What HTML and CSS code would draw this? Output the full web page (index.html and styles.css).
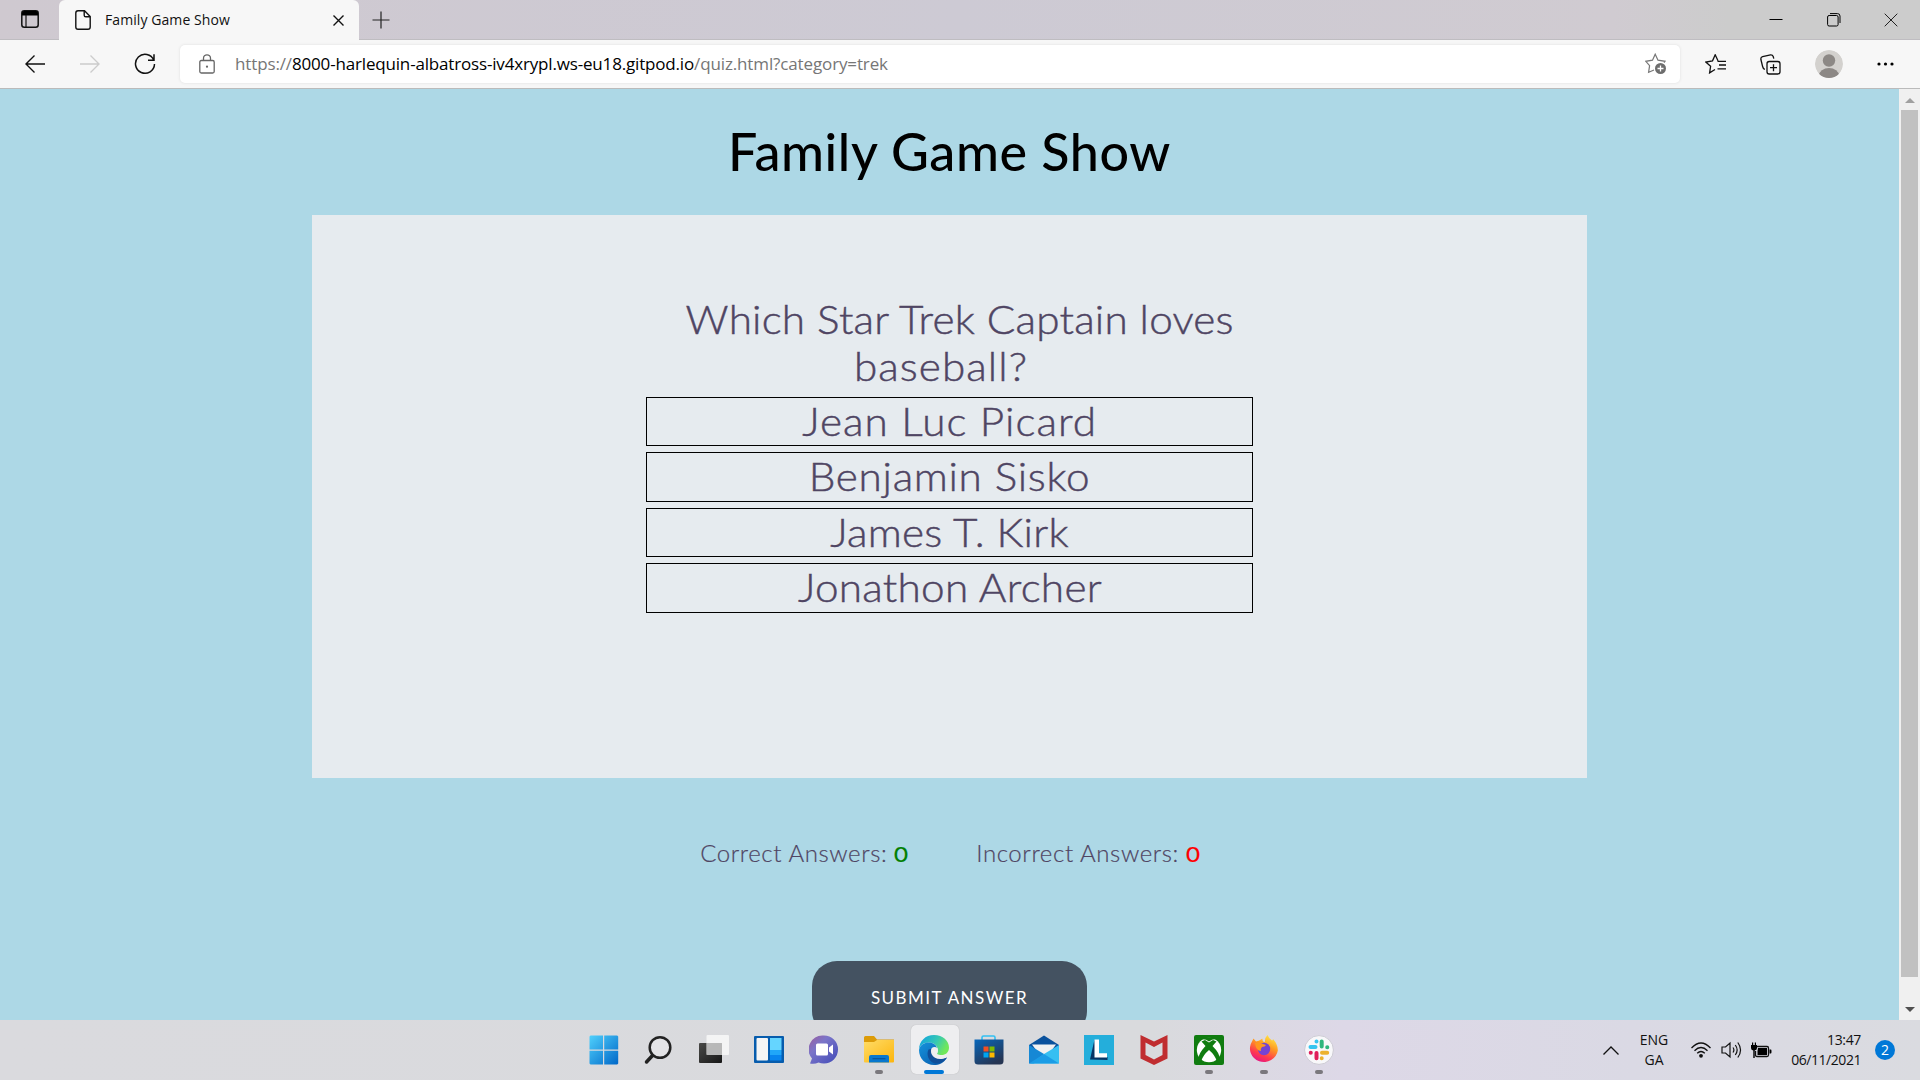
FILE: index.html
```html
<!DOCTYPE html>
<html lang="en">
<head>
<meta charset="utf-8">
<title>Family Game Show</title>
<link rel="stylesheet" href="styles.css">
</head>
<body>
<div class="desktop">
  <header class="tabs">
    <div class="tab-actions"><svg width="18" height="18" viewBox="0 0 18 18"><rect x=".8" y=".8" width="16.4" height="16.4" rx="2.5" fill="none" stroke="#111" stroke-width="1.5"/><path d="M1 2.5Q1 1 3 1h12q2 0 2 1.500V5.500H1z" fill="#000"/><path d="M5 5v12" stroke="#111" stroke-width="1.2"/></svg></div>
    <div class="tab">
      <svg width="16" height="20" viewBox="0 0 16 20" fill="none" stroke="#111" stroke-width="1.4"><path d="M3 .8h6.500L15.200 6.500V17q0 2.200-2.200 2.200H3Q.8 19.200.8 17V3Q.8.8 3 .8zM9.200 1v4.200q0 1.600 1.600 1.600H15"/></svg>
      <span class="tab-title">Family Game Show</span>
      <svg class="tab-close" width="11" height="11" viewBox="0 0 11 11" stroke="#111" stroke-width="1.4"><path d="M.5.500l10 10M10.500.500l-10 10"/></svg>
    </div>
    <svg class="new-tab" width="18" height="18" viewBox="0 0 18 18" stroke="#222" stroke-width="1.200"><path d="M9 .5v17M.5 9h17"/></svg>
    <div class="window-buttons">
      <svg width="14" height="14" viewBox="0 0 14 14"><path d="M.5 6.500h13" stroke="#000"/></svg>
      <svg width="14" height="14" viewBox="0 0 14 14" fill="none" stroke="#000"><rect x=".6" y="2.500" width="10.500" height="10.500" rx="1.500"/><path d="M3 .6h7.500q2.500 0 2.500 2.500V10"/></svg>
      <svg width="14" height="14" viewBox="0 0 14 14" stroke="#222"><path d="M.7.700l12.600 12.600M13.300.700L.700 13.300"/></svg>
    </div>
  </header>
  <nav class="toolbar">
    <svg width="20" height="18" viewBox="0 0 20 18" fill="none" stroke="#111" stroke-width="1.400"><path d="M20 9H1M9.500.600L1 9l8.500 8.400"/></svg>
    <svg width="20" height="18" viewBox="0 0 20 18" fill="none" stroke="#ccc" stroke-width="1.400"><path d="M0 9h19M10.500.600L19 9l-8.500 8.400"/></svg>
    <svg width="22" height="22" viewBox="0 0 22 22" fill="none" stroke="#111" stroke-width="1.500"><path d="M19.800 7.200A9.500 9.500 0 1 0 20.500 11M20 1.200v6h-6"/></svg>
    <div class="address">
      <svg width="16" height="20" viewBox="0 0 16 20" fill="none" stroke="#666" stroke-width="1.300"><rect x=".8" y="6.500" width="14.400" height="12.500" rx="1.500"/><path d="M4.500 6.500V4.300a3.500 3.500 0 0 1 7 0v2.200"/><circle cx="8" cy="12.700" r="1.100" fill="#666" stroke="none"/></svg>
      <span class="url">https://<b>8000-harlequin-albatross-iv4xrypl.ws-eu18.gitpod.io</b>/quiz.html?category=trek</span>
      <svg class="star-add" width="22" height="22" viewBox="0 0 22 22" fill="none" stroke="#777" stroke-width="1.200"><path d="M9 17l-5.400 2.200 1-6.500L.800 8.300 7.500 7.200 10.200 1.200 13 7.200l7 1.100-1 1.300"/><circle cx="15.500" cy="15.500" r="5.500" fill="#6d6d6d" stroke="none"/><path d="M15.500 12.500v6M12.500 15.500h6" stroke="#fff" stroke-width="1.300"/></svg>
    </div>
    <div class="tools">
      <svg width="21" height="20" viewBox="0 0 21 20" fill="none" stroke="#111" stroke-width="1.300"><path d="M10 15.500l-5.400 3.400 1-6.600L.800 8 7.500 6.800 10.200.800 13 6.800M12.500 7.300H21M14 11h7M12.500 14.800H21"/></svg>
      <svg width="21" height="21" viewBox="0 0 21 21" fill="none" stroke="#111" stroke-width="1.300"><rect x="7" y="7.500" width="13" height="12.500" rx="2.200"/><path d="M13.500 10.200v7M10 13.700h7M4.800 15.500Q3 14.500 2.600 12.500L.9 5.500Q.5 3.200 2.600 2.600L10.500.800Q12.600.600 13.200 2.500L13.800 4.600"/></svg>
      <svg width="28" height="28" viewBox="0 0 28 28"><defs><clipPath id="avatar"><circle cx="14" cy="14" r="14"/></clipPath></defs><g clip-path="url(#avatar)"><circle cx="14" cy="14" r="14" fill="#d3d1ce"/><circle cx="14" cy="10.500" r="6.200" fill="#8c8885"/><ellipse cx="14" cy="25.500" rx="10" ry="7.500" fill="#8c8885"/></g></svg>
      <svg width="17" height="4" viewBox="0 0 17 4"><circle cx="2" cy="2" r="1.600"/><circle cx="8.500" cy="2" r="1.600"/><circle cx="15" cy="2" r="1.600"/></svg>
    </div>
  </nav>
  <div class="viewport">
    <main class="page">
      <h1 class="title">Family Game Show</h1>
      <section class="card">
        <div class="question"><p class="q-first">Which Star Trek Captain loves</p><p class="q-last">baseball?</p></div>
        <ul class="options">
          <li class="option wide"><span>Jean Luc Picard</span></li>
          <li class="option mid"><span>Benjamin Sisko</span></li>
          <li class="option"><span>James T. Kirk</span></li>
          <li class="option"><span>Jonathon Archer</span></li>
        </ul>
      </section>
      <div class="scores">
        <p class="score">Correct Answers: <strong class="right">0</strong></p>
        <p class="score">Incorrect Answers: <strong class="wrong">0</strong></p>
      </div>
      <button class="submit">SUBMIT ANSWER</button>
    </main>
    <div class="scrollbar"><i class="arrow-up"></i><i class="thumb"></i><i class="arrow-down"></i></div>
  </div>
  <footer class="taskbar">
    <div class="apps">
      <div class="app"><svg width="30" height="30" viewBox="0 0 30 30"><defs><linearGradient id="win" x2="1" y2="1"><stop stop-color="#4fd0fc"/><stop offset="1" stop-color="#0067c8"/></linearGradient></defs><path d="M1.500.500H14v14H.500v-13zM15.200.500h13l1 1v13h-14zM.500 15.700H14v13.800H1.500l-1-1zM15.200 15.700h14v12.800l-1 1h-13z" fill="url(#win)"/></svg></div>
      <div class="app"><svg width="30" height="30" viewBox="0 0 30 30" fill="none" stroke="#222"><circle cx="16" cy="12.500" r="10.300" fill="#e3e3e6" stroke-width="2.500"/><path d="M8.500 20.500l-6 6.500" stroke-width="3.500" stroke-linecap="round"/></svg></div>
      <div class="app"><svg width="30" height="30" viewBox="0 0 30 30"><defs><linearGradient id="tv" x2="1" y2="1"><stop stop-color="#4a4a48"/><stop offset="1" stop-color="#161616"/></linearGradient></defs><rect x="0" y="8" width="23" height="20" rx="1" fill="url(#tv)"/><rect x="7.500" y="0" width="22.500" height="20" rx="1" fill="#fafafa" fill-opacity=".8"/><path d="M7.500 8H23v12H7.500z" fill="#aaa" fill-opacity=".65"/></svg></div>
      <div class="app"><svg width="30" height="30" viewBox="0 0 30 30"><rect y="1" width="30" height="27" rx="1" fill="#075cad"/><rect x="2.500" y="3" width="11.500" height="22.500" rx="1" fill="#f5f5f5"/><path d="M16 3h11.500v12H16z" fill="#65d5ff"/><path d="M16 15h11.500v5H16z" fill="#20a7f9"/><path d="M16 20h11.500v5.500H16z" fill="#0885ee"/></svg></div>
      <div class="app"><svg width="30" height="30" viewBox="0 0 30 30"><defs><linearGradient id="chat" x2="1" y2="1"><stop stop-color="#9c5b9b"/><stop offset=".35" stop-color="#7b75c9"/><stop offset="1" stop-color="#3f49b7"/></linearGradient></defs><path d="M15 .500a14 14 0 1 1 0 28q-3 0-5.500-1-4 2-8.500 1l2-5A14 14 0 0 1 15 .500z" fill="url(#chat)"/><rect x="7" y="8.500" width="12" height="12" rx="1.500" fill="#fff"/><path d="M20 12.500l4-3v10l-4-3z" fill="#fff"/></svg></div>
      <div class="app open"><svg width="30" height="30" viewBox="0 0 30 30"><defs><linearGradient id="fold" x2="1" y2="1"><stop stop-color="#ffdc67"/><stop offset="1" stop-color="#fcb50d"/></linearGradient></defs><path d="M0 2.500q0-1.500 1.500-1.500H10l3 3.500h17V10H0z" fill="#dc9b08"/><path d="M0 7h10l3-2h17v21.500q0 1-1 1H1q-1 0-1-1z" fill="url(#fold)"/><path d="M5 27.500V22q0-2 2-2h16q2 0 2 2v5.500z" fill="#0878ce"/><path d="M8.500 23.700h13" stroke="#07539a" stroke-width="1.200"/></svg></div>
      <div class="app active"><svg width="30" height="30" viewBox="0 0 30 30"><defs><linearGradient id="edg" x2="1" y2=".4"><stop offset=".1" stop-color="#13a5de"/><stop offset=".6" stop-color="#35c8b4"/><stop offset="1" stop-color="#70e75b"/></linearGradient><linearGradient id="edb" x2="1" y2="1"><stop stop-color="#1593dc"/><stop offset="1" stop-color="#0857a9"/></linearGradient></defs><path d="M0 15C0 6 6.500 0 15 0c9 0 15 6 15 12.500C30 17.500 26.500 20 22.500 20c-4 0-5-1-4-2.500C20 12 16 7.500 10 7.500 4 7.500.500 11 0 15z" fill="url(#edg)"/><path d="M0 15C1 9.500 5.500 7.500 9.500 7.500c5 0 8 2.500 8.500 6-3.500-2-7 1.500-6 5.500C13 24.500 20 27 28 22.500 24.500 28.500 20 30 15 30 6.500 30 0 23.500 0 15z" fill="url(#edb)"/><path d="M9.500 14.500c-2.500 5 0 12 6.500 14 5 .500 9.500-2 12-6-7 3-13 1.500-15.500-3.500-.800-2 0-4 1.500-5.500z" fill="#104f99"/><circle cx="15.500" cy="15.500" r="3.500" fill="#eeeef0"/></svg></div>
      <div class="app"><svg width="30" height="30" viewBox="0 0 30 30"><defs><linearGradient id="store" x2=".6" y2="1"><stop stop-color="#0867bb"/><stop offset="1" stop-color="#263553"/></linearGradient></defs><path d="M8 5V2.500Q8 1 9.500 1h10Q21 1 21 2.500V5" fill="none" stroke="#32c0f2" stroke-width="1.600"/><path d="M.500 4.500h29V26q0 3.500-3.500 3.500H4Q.500 29.500.500 26z" fill="url(#store)"/><path d="M9.500 11.500h5v5h-5z" fill="#f25022"/><path d="M15.500 11.500h5v5h-5z" fill="#7fba00"/><path d="M9.500 17.500h5v5h-5z" fill="#00a4ef"/><path d="M15.500 17.500h5v5h-5z" fill="#ffb900"/></svg></div>
      <div class="app"><svg width="30" height="30" viewBox="0 0 30 30"><path d="M0 10L15 .500 30 10v6H0z" fill="#0b529d"/><path d="M3 9.500h24L20 19H10z" fill="#f1f1f1"/><path d="M0 10l15 9-10 9.500H0z" fill="#1688d5"/><path d="M30 10v18.500H2L15 19z" fill="#36bff2"/><path d="M15 19l15 9.500H0z" fill="#1b9ce6"/></svg></div>
      <div class="app"><svg width="30" height="30" viewBox="0 0 30 30"><path d="M0 0h30v30H0z" fill="#24aedb"/><path d="M10.500 4.500L6 24.500l17.500.500v-3H12z" fill="#063565"/><path d="M10.500 4.500H15v13.700h8V22.500H10.500z" fill="#fff"/></svg></div>
      <div class="app"><svg width="30" height="30" viewBox="0 0 30 30"><path d="M1.500 0L15 6.500 28.500 0v23.500L15 30 1.500 23.500zM6.500 7.500V20L15 24.500 23.500 20V7.500L15 12z" fill="#c02d30" fill-rule="evenodd"/></svg></div>
      <div class="app open"><svg width="30" height="30" viewBox="0 0 30 30"><rect width="30" height="30" rx="2" fill="#107c10"/><circle cx="15" cy="15" r="12.200" fill="#fff"/><path d="M7 4.500q4-1 8 2 4-3 8-2L22 3.500Q15 1 8 3.500zM15 7.500l4-2.500 3.500 1.500L18.500 11q8 8 7 13l-2.500 2.500Q21 20 15 15 9 20 7 26.500L4.500 24Q4 19 11.500 11L7.500 6.500 11 5z" fill="#107c10"/></svg></div>
      <div class="app open"><svg width="30" height="30" viewBox="0 0 30 30"><defs><linearGradient id="ff" x1=".8" x2=".3" y2="1"><stop stop-color="#fff04a"/><stop offset=".4" stop-color="#ff9a21"/><stop offset=".75" stop-color="#ff384f"/><stop offset="1" stop-color="#e31587"/></linearGradient></defs><path d="M3 6.500l1.500-3 2.500 3q3-.500 5-2 1-1 1.500-.500-.500 3 2.500 3Q15.500 3 18.500 0q1 3 4.500 5.500 1-.500 1-1.500 5 5.500 4.800 11.500A14 13.500 0 1 1 3 6.500z" fill="url(#ff)"/><circle cx="15" cy="14" r="6.200" fill="#7543d3"/><path d="M6 8q5-1 8 1l3 1q-1 2-4 2-2 2-1 4-5 0-6-8z" fill="#ff9720"/></svg></div>
      <div class="app open"><svg width="30" height="30" viewBox="0 0 30 30"><circle cx="15" cy="15" r="14.400" fill="#f8f8fa" stroke="#c4c1cc" stroke-width=".8"/><g stroke-width="4" stroke-linecap="round"><path d="M6.500 12h5M12.500 6.500v.1" stroke="#36c5f0"/><path d="M17.700 6.500v5M23.200 12.200h.1" stroke="#2eb67d"/><path d="M18 17.700h5.200M17.700 23.200v.1" stroke="#ecb22e"/><path d="M12.500 18v5.200M6.700 17.700h.1" stroke="#e01e5a"/></g></svg></div>
    </div>
    <div class="tray">
      <svg width="16" height="9" viewBox="0 0 16 9" fill="none" stroke="#111" stroke-width="1.300"><path d="M.5 8.500L8 1l7.500 7.500"/></svg>
      <div class="lang">ENG<br>GA</div>
      <svg class="wifi" width="20" height="16" viewBox="0 0 20 16" fill="none" stroke="#111" stroke-width="1.300"><path d="M.5 6Q10-4 19.500 6M3.500 8.700q6.500-6.500 13 0M6.200 11.300q3.800-3.600 7.600 0"/><circle cx="10" cy="13.800" r="1.900" fill="#111" stroke="none"/></svg>
      <svg class="sound" width="21" height="18" viewBox="0 0 21 18" fill="none" stroke="#111" stroke-width="1.200"><path d="M1 6h3.500L9 2v14l-4.500-4H1zM12 6.500q1.800 2.500 0 5M14.300 4q3.700 5 0 10M16.800 1.500q5.500 7.500 0 15"/></svg>
      <svg class="battery" width="21" height="16" viewBox="0 0 21 16"><path d="M6 4.500h10q1.500 0 1.500 1.500v7q0 1.500-1.500 1.500H6q-1.500 0-1.500-1.500V9" fill="none" stroke="#111" stroke-width="1.300"/><path d="M7 6h9v7H6.500V9zM18.500 7.500h1.500q.5 0 .5 2t-.5 2h-1.500z"/><path d="M0 3h1V.5h1.200V3h1.600V.5H5V3h1v3q0 2.200-2.300 2.500V16H2.300V8.500Q0 8.200 0 6z"/></svg>
      <div class="clock">13:47<br><span class="date">06/11/2021</span></div>
      <span class="notice">2</span>
    </div>
  </footer>
</div>
</body>
</html>
```
FILE: styles.css
```css
* { box-sizing: border-box; }
body { margin: 0; font-family: "Open Sans", sans-serif; color: #111; }
h1, p, ul { margin: 0; padding: 0; }
svg { display: block; flex: none; }
.desktop { width: 1920px; height: 1080px; display: flex; flex-direction: column; overflow: hidden; }

/* Browser chrome */
.tabs { height: 40px; flex: none; display: flex; align-items: center; background: linear-gradient(90deg, #cfc9d0, #cdcad4 50%, #d0cbd1 84%, #ccc 90%); border-bottom: 1px solid #bfbdc1; }
.tab-actions { width: 59px; padding: 0 0 1px 21px; }
.tab { width: 300px; height: 40px; display: flex; align-items: center; padding: 0 15px 0 16px; background: #f7f7f7; border-radius: 6px 6px 0 0; margin-bottom: -1px; }
.tab-title { margin-left: 14px; font-size: 14px; line-height: 20px; letter-spacing: .08px; white-space: nowrap; }
.tab-close { margin-left: auto; }
.new-tab { margin-left: 13px; }
.window-buttons { margin: 0 22px 0 auto; display: flex; gap: 43.5px; }

.toolbar { height: 49px; flex: none; display: flex; align-items: center; padding: 0 26px 0 25px; background: #f7f7f7; border-bottom: 1px solid #bbb; }
.toolbar > svg { margin: 0 34.5px 1px 0; }
.address { width: 1500px; height: 38px; margin-left: -10.5px; display: flex; align-items: center; padding: 0 13px 0 19px; background: #fff; border-radius: 5px; box-shadow: 0 0 3px #ddd; }
.url { margin-left: 20px; font-size: 17px; line-height: 24px; letter-spacing: -.13px; color: #767676; white-space: nowrap; }
.url b { font-weight: 400; color: #000; letter-spacing: -.17px; }
.star-add { margin-left: auto; }
.tools { margin-left: auto; display: flex; align-items: center; gap: 34px; }

/* Quiz page */
.viewport { flex: 1; min-height: 0; display: flex; }
.page { flex: 1; display: flex; flex-direction: column; align-items: center; background: #add8e6; overflow: hidden; font-family: Lato, sans-serif; }
.title { flex: none; padding-top: 31px; height: 126px; font-size: 52px; line-height: 62px; font-weight: 500; letter-spacing: .6px; color: #000; white-space: nowrap; }
.card { flex: none; width: 1275px; height: 563px; padding: 80px 334px 0; background: #e6ebef; color: #4f4563; font-size: 39.5px; font-weight: 300; text-align: center; -webkit-text-stroke: .45px; }
.question { line-height: 47px; white-space: nowrap; }
.question p, .option span { transform: scaleX(1.07); }
.q-first { padding-left: 19px; letter-spacing: .2px; }
.q-last { padding-right: 16px; letter-spacing: 1px; }
.options { list-style: none; display: grid; gap: 6px; margin-top: 7.7px; }
.option { height: 49.6px; border: 1px solid #000; line-height: 46px; letter-spacing: .25px; }
.option span { display: inline-block; }
.wide { letter-spacing: .95px; }
.mid { letter-spacing: .65px; }
.scores { flex: none; display: flex; gap: 69px; margin-top: 59px; color: #4f4563; font-size: 24px; line-height: 32px; font-weight: 300; letter-spacing: .6px; -webkit-text-stroke: .2px; }
.right, .wrong { display: inline-block; font-size: 21px; line-height: 1; transform: scaleX(1.15); transform-origin: left; }
.right { color: green; }
.wrong { color: red; }
.submit { flex: none; width: 275px; height: 75px; margin-top: 92px; padding-bottom: 3px; border: 0; border-radius: 25px; background: #445261; color: #fff; font: 400 17px Lato, sans-serif; letter-spacing: 1.45px; }

.scrollbar { width: 21px; display: flex; flex-direction: column; align-items: center; background: #f0f0f0; padding: 9px 0 8px; }
.arrow-up { border: 5px solid transparent; border-top: 0; border-bottom-color: #a0a0a0; }
.thumb { width: 17px; height: 867px; margin-top: 7px; background: #c1c1c1; }
.arrow-down { margin-top: auto; border: 5px solid transparent; border-bottom: 0; border-top-color: #505050; }

/* Taskbar */
.taskbar { height: 60px; flex: none; display: flex; align-items: center; padding: 0 25px 0 576.5px; background: linear-gradient(90deg, #dadade, #d9dadd 60%, #ddd8e7 70%, #dad9e4 85%, #dadbe0); }
.apps { display: grid; grid-template-columns: repeat(14, 55px); }
.app { height: 60px; display: grid; place-items: center; position: relative; }
.active::before { content: ""; position: absolute; inset: 5px 3px 6px 4px; border-radius: 5px; background: #eeeef0; box-shadow: 0 0 1px #aaa; }
.active svg { position: relative; }
.open::after, .active::after { content: ""; position: absolute; left: 50%; top: 50px; width: 8px; height: 4px; border-radius: 2px; background: #7a787d; transform: translateX(-50%); }
.active::after { width: 20px; background: #0078d7; }
.tray { margin-left: auto; display: flex; align-items: center; font-size: 14px; line-height: 20px; }
.lang { width: 40px; margin-left: 15px; text-align: center; }
.wifi { margin-left: 17px; }
.sound { margin-left: 10px; }
.battery { margin-left: 9px; }
.clock { width: 89px; text-align: right; letter-spacing: -.35px; }
.date { letter-spacing: -.45px; }
.notice { width: 20px; height: 20px; margin-left: 14px; border-radius: 50%; background: #0078d7; color: #fff; text-align: center; font-size: 14px; }
```
